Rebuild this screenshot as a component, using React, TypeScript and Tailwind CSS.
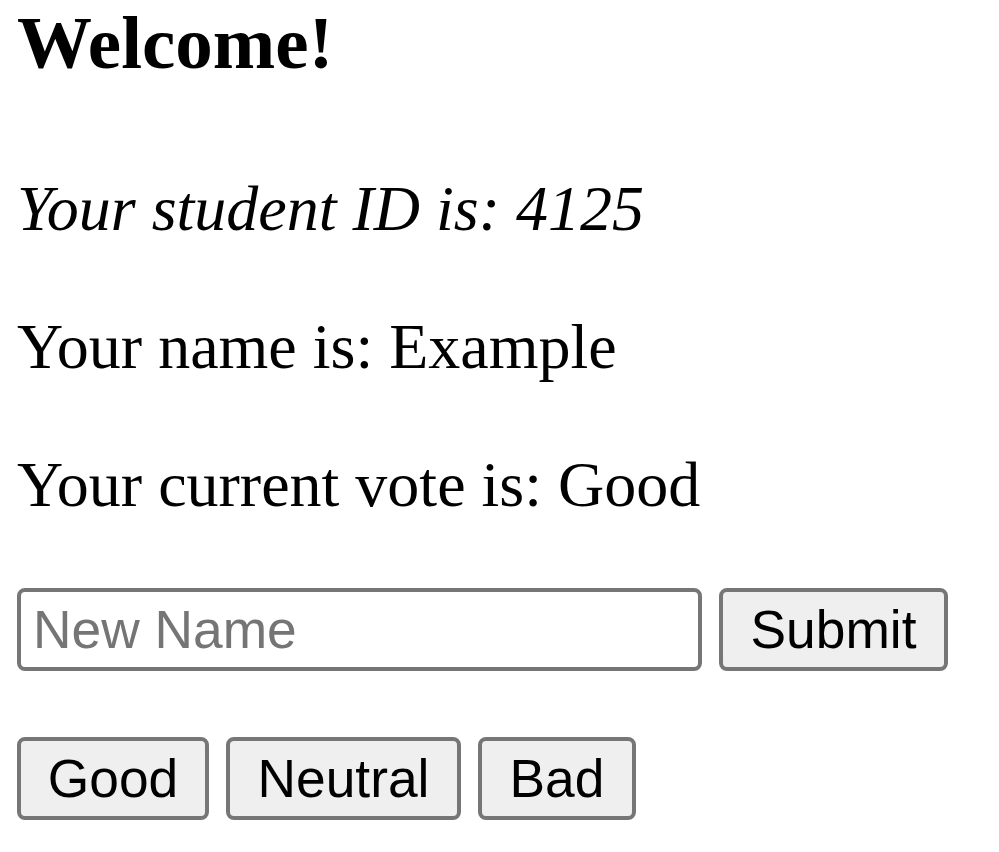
import { useState } from 'react';

const serif = 'font-["Liberation_Serif","Times_New_Roman",serif]';
const sans = 'font-["Liberation_Sans",Arial,sans-serif]';

const voteOptions = [
  { label: 'Good', width: 'w-[192px]' },
  { label: 'Neutral', width: 'w-[235px]' },
  { label: 'Bad', width: 'w-[158px]' },
];

export default function App() {
  const [name, setName] = useState('Example');
  const [draft, setDraft] = useState('');
  const [vote, setVote] = useState('Good');

  return (
    <div className={`min-h-screen bg-white pl-[17px] text-black ${serif}`}>
      {/* Header */}
      <h3 className="m-0 text-[75px] font-bold leading-[86px]">Welcome!</h3>

      <p className="mt-[85.6px] text-[64px] italic leading-[normal]">Your student ID is: 4125</p>
      <p className="mt-[64px] text-[64px] leading-[normal]">Your name is: {name}</p>
      <p className="mt-[64px] text-[64px] leading-[normal]">Your current vote is: {vote}</p>

      {/* Name form */}
      <form
        className="mt-[66.5px] flex items-center"
        onSubmit={(e) => {
          e.preventDefault();
          if (draft.trim()) setName(draft.trim());
          setDraft('');
        }}
      >
        <input
          value={draft}
          onChange={(e) => setDraft(e.target.value)}
          placeholder="New Name"
          className={`h-[83px] w-[685px] rounded-lg border-4 border-[#767676] bg-white px-[12px] text-[53.33px] text-black outline-none placeholder:text-[#757575] ${sans}`}
        />
        <button
          type="submit"
          className={`ml-[17px] flex h-[83px] w-[229px] items-center justify-center rounded-lg border-4 border-[#767676] bg-[#efefef] text-[53.33px] text-black ${sans}`}
        >
          Submit
        </button>
      </form>

      {/* Vote buttons */}
      <div className="mt-[66px] flex items-center gap-[17px]">
        {voteOptions.map((opt) => (
          <button
            key={opt.label}
            onClick={() => setVote(opt.label)}
            className={`flex h-[83px] ${opt.width} items-center justify-center rounded-lg border-4 border-[#767676] bg-[#efefef] text-[53.33px] text-black ${sans}`}
          >
            {opt.label}
          </button>
        ))}
      </div>
    </div>
  );
}
